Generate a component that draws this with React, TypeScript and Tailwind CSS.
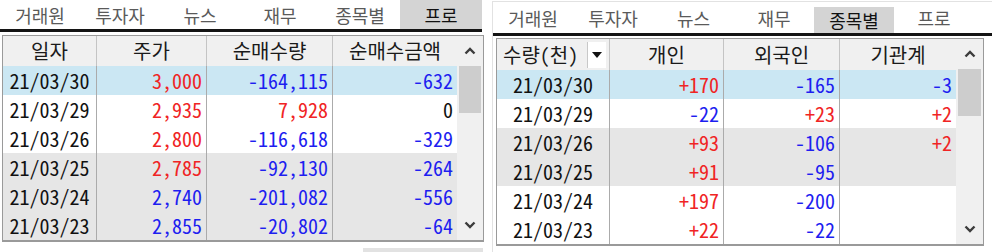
import React from 'react'

type Cell = { v: string; c?: 'r' | 'b' | 'k' }
type Row = { date: string; bg: 'blue' | 'white' | 'gray'; cells: Cell[] }

const font = "font-['Noto_Sans_CJK_KR',sans-serif] [font-feature-settings:'hwid']"

const color = (c?: string) =>
  c === 'r' ? 'text-[#f02424]' : c === 'b' ? 'text-[#1e1ef0]' : 'text-[#111]'

const rowBg = (bg: string) =>
  bg === 'blue' ? 'bg-[#cbe7f3]' : bg === 'gray' ? 'bg-[#e6e6e6]' : 'bg-white'

const tabs = ['거래원', '투자자', '뉴스', '재무', '종목별', '프로']

function Chevron({ down = false }: { down?: boolean }) {
  return (
    <svg width="12" height="8" viewBox="0 0 12 8" className={down ? 'rotate-180' : ''}>
      <polyline points="1.5,6.5 6,2 10.5,6.5" fill="none" stroke="#3c3c3c" strokeWidth="2.4" />
    </svg>
  )
}

function Scrollbar() {
  return (
    <div className="flex flex-col w-[27px] bg-[#f0f0f0]">
      <div className="h-[30px] flex items-center justify-center">
        <Chevron />
      </div>
      <div className="h-[47px] mx-[2px] bg-[#cdcdcd]" />
      <div className="flex-1" />
      <div className="h-[30px] flex items-center justify-center">
        <Chevron down />
      </div>
    </div>
  )
}

function Tabs({ active, widths, height, activeTop }: { active: number; widths: number[]; height: string; activeTop: string }) {
  return (
    <div className={`flex items-end ${height}`}>
      {tabs.map((t, i) => (
        <div
          key={t}
          style={{ width: widths[i] }}
          className={`flex items-center justify-center text-[18px] leading-none ${
            i === active ? `bg-[#d4d4d4] text-[#111] ${activeTop}` : 'h-full text-[#5a5a5a]'
          }`}
        >
          {t}
        </div>
      ))}
    </div>
  )
}

const leftRows: Row[] = [
  { date: '21/03/30', bg: 'blue', cells: [{ v: '3,000', c: 'r' }, { v: '-164,115', c: 'b' }, { v: '-632', c: 'b' }] },
  { date: '21/03/29', bg: 'white', cells: [{ v: '2,935', c: 'r' }, { v: '7,928', c: 'r' }, { v: '0', c: 'k' }] },
  { date: '21/03/26', bg: 'white', cells: [{ v: '2,800', c: 'r' }, { v: '-116,618', c: 'b' }, { v: '-329', c: 'b' }] },
  { date: '21/03/25', bg: 'gray', cells: [{ v: '2,785', c: 'r' }, { v: '-92,130', c: 'b' }, { v: '-264', c: 'b' }] },
  { date: '21/03/24', bg: 'gray', cells: [{ v: '2,740', c: 'b' }, { v: '-201,082', c: 'b' }, { v: '-556', c: 'b' }] },
  { date: '21/03/23', bg: 'gray', cells: [{ v: '2,855', c: 'b' }, { v: '-20,802', c: 'b' }, { v: '-64', c: 'b' }] },
]

const rightRows: Row[] = [
  { date: '21/03/30', bg: 'blue', cells: [{ v: '+170', c: 'r' }, { v: '-165', c: 'b' }, { v: '-3', c: 'b' }] },
  { date: '21/03/29', bg: 'white', cells: [{ v: '-22', c: 'b' }, { v: '+23', c: 'r' }, { v: '+2', c: 'r' }] },
  { date: '21/03/26', bg: 'gray', cells: [{ v: '+93', c: 'r' }, { v: '-106', c: 'b' }, { v: '+2', c: 'r' }] },
  { date: '21/03/25', bg: 'gray', cells: [{ v: '+91', c: 'r' }, { v: '-95', c: 'b' }, { v: '' }] },
  { date: '21/03/24', bg: 'white', cells: [{ v: '+197', c: 'r' }, { v: '-200', c: 'b' }, { v: '' }] },
  { date: '21/03/23', bg: 'white', cells: [{ v: '+22', c: 'r' }, { v: '-22', c: 'b' }, { v: '' }] },
]

function Grid({
  cols,
  heads,
  rows,
  headH,
  firstHead,
}: {
  cols: number[]
  heads: string[]
  rows: Row[]
  headH: string
  firstHead?: React.ReactNode
}) {
  return (
    <div className="flex border border-[#9a9a9a] border-b-2">
      <div className="flex flex-col">
        <div className={`flex ${headH} bg-[#f0f0f0]`}>
          {heads.map((h, i) => (
            <div
              key={h}
              style={{ width: cols[i] }}
              className={`flex items-center justify-center text-[20px] leading-none text-[#1a1a1a] ${
                i < heads.length - 1 ? 'border-r border-[#c4c4c4]' : ''
              }`}
            >
              {i === 0 && firstHead ? firstHead : h}
            </div>
          ))}
        </div>
        {rows.map((r) => (
          <div key={r.date} className={`flex h-[29px] ${rowBg(r.bg)}`}>
            <div
              style={{ width: cols[0] }}
              className="flex items-center justify-center text-[20px] leading-none text-[#111] border-r border-[#ababab]"
            >
              {r.date}
            </div>
            {r.cells.map((c, i) => (
              <div
                key={i}
                style={{ width: cols[i + 1] }}
                className={`flex items-center justify-end pr-[4px] text-[20px] leading-none ${color(c.c)} ${
                  i < 2 ? 'border-r border-[#ababab]' : ''
                }`}
              >
                {c.v}
              </div>
            ))}
          </div>
        ))}
      </div>
      <Scrollbar />
    </div>
  )
}

export default function App() {
  return (
    <div className={`flex w-[992px] h-[252px] bg-white overflow-hidden ${font}`}>
      {/* Left panel */}
      <div className="flex flex-col w-[485px]">
        <Tabs active={5} widths={[80, 80, 80, 80, 80, 82]} height="h-[29px]" activeTop="h-full" />
        <div className="h-[3px] bg-[#141414] mr-[3px]" />
        <div className="h-[3px]" />
        <div className="ml-[2px] w-[482px]">
          <Grid
            cols={[94, 110, 126, 124]}
            heads={['일자', '주가', '순매수량', '순매수금액']}
            rows={leftRows}
            headH="h-[30px]"
          />
        </div>
        <div className="flex-1 flex items-end justify-end pr-[2px]">
          <div className="w-[120px] h-[4px] bg-[#e2e2e2]" />
        </div>
      </div>

      <div className="w-[7px]" />

      {/* Right panel */}
      <div className="flex flex-col flex-1 border-l border-t border-[#e2e2e2] mt-[1px]">
        <Tabs active={4} widths={[80, 80, 81, 80, 80, 80]} height="h-[31px]" activeTop="h-[26px]" />
        <div className="h-[3px] bg-[#141414]" />
        <div className="h-[2px]" />
        <div className="ml-[3px] w-[488px]">
          <Grid
            cols={[113, 114, 116, 116]}
            heads={['수량(천)', '개인', '외국인', '기관계']}
            rows={rightRows}
            headH="h-[31px]"
            firstHead={
              <div className="flex items-center w-full h-full pl-[6px] pr-[3px]">
                <span className="flex-1 text-[20px] leading-none">수량(천)</span>
                <div className="w-[19px] h-[26px] bg-white border-l border-[#c8c8c8] flex items-center justify-center">
                  <svg width="10" height="6" viewBox="0 0 10 6">
                    <polygon points="0,0 10,0 5,6" fill="#111" />
                  </svg>
                </div>
              </div>
            }
          />
        </div>
      </div>
    </div>
  )
}
